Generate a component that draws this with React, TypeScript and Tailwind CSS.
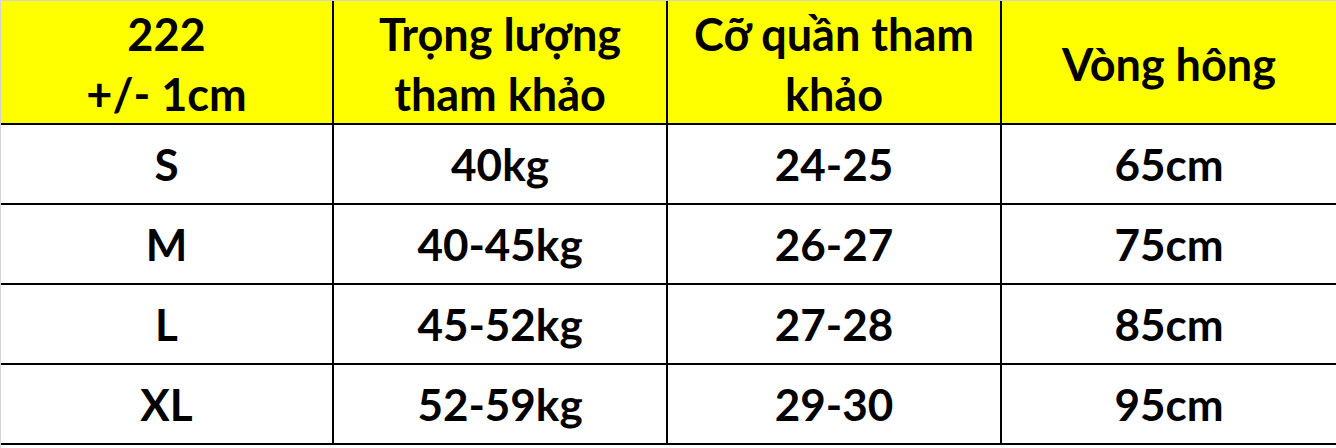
import React from 'react';

const rows = [
  ['S', '40kg', '24-25', '65cm'],
  ['M', '40-45kg', '26-27', '75cm'],
  ['L', '45-52kg', '27-28', '85cm'],
  ['XL', '52-59kg', '29-30', '95cm'],
];

const headers = [
  ['222', '+/- 1cm'],
  ['Trọng lượng', 'tham khảo'],
  ['Cỡ quần tham', 'khảo'],
  ['Vòng hông'],
];

const widths = ['w-[333px]', 'w-[334px]', 'w-[334px]', 'w-[334px]'];

export default function App() {
  return (
    <div
      className="w-[1336px] h-[448px] bg-white border-t border-l border-[#d4d4d4] text-black font-bold"
      style={{ fontFamily: 'Lato, "Open Sans", sans-serif' }}
    >
      <div className="flex h-[124px] bg-[#ffff00] border-b-2 border-black">
        {headers.map((h, i) => (
          <div
            key={i}
            className={`${widths[i]} flex flex-col items-center justify-center pt-[4px] text-[45px] leading-[60px] ${i < 3 ? 'border-r-2 border-black' : ''}`}
          >
            {h.map((line) => (
              <span key={line}>{line}</span>
            ))}
          </div>
        ))}
      </div>
      {rows.map((r, ri) => (
        <div key={ri} className="flex h-[80px] border-b-2 border-black">
          {r.map((c, i) => (
            <div
              key={i}
              className={`${widths[i]} flex items-center justify-center text-[44px] ${i < 3 ? 'border-r-2 border-black' : ''}`}
            >
              {c}
            </div>
          ))}
        </div>
      ))}
    </div>
  );
}
